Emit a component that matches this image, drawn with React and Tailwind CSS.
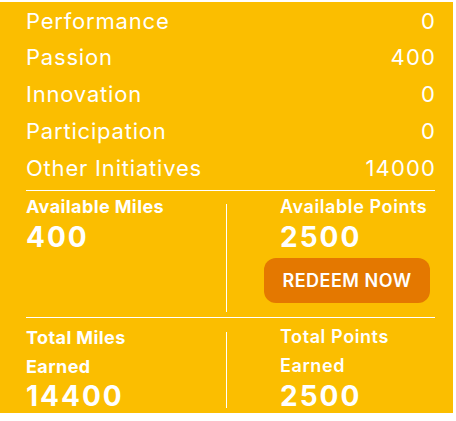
const scores = [
  { label: 'Performance', value: '0' },
  { label: 'Passion', value: '400' },
  { label: 'Innovation', value: '0' },
  { label: 'Participation', value: '0' },
  { label: 'Other Initiatives', value: '14000' },
]

function Divider() {
  return <div className="h-px w-full bg-white" />
}

export default function App() {
  return (
    <div className="h-[421px] w-[456px] bg-white pt-[2px] font-['Inter','Noto_Sans',sans-serif] text-white">
      <div className="h-[411px] w-[453px] bg-[#fbbe00] pl-[26px] pr-[18px] pt-[0.5px]">
        <ul>
          {scores.map((row) => (
            <li key={row.label} className="flex items-center justify-between text-[22px] leading-[36.75px] font-normal tracking-[0.8px]">
              <span>{row.label}</span>
              <span className="-mr-[1.2px] tracking-[1.2px]">{row.value}</span>
            </li>
          ))}
        </ul>

        <div className="mt-[3.75px]">
          <Divider />
        </div>

        <div className="flex h-[126px]">
          <div className="w-[200px] pt-[3.5px]">
            <p className="text-[18px] leading-[24px] font-bold tracking-[0.4px]">Available Miles</p>
            <p className="mt-[1.5px] text-[28px] leading-[34px] font-bold tracking-[2px]">400</p>
          </div>
          <div className="mb-[5px] mt-[13px] w-px bg-white" />
          <div className="flex-1 pt-[3.5px]">
            <div className="pl-[53px]">
              <p className="text-[18px] leading-[24px] font-semibold tracking-[0.6px]">Available Points</p>
              <p className="mt-[1.5px] text-[28px] leading-[34px] font-bold tracking-[2px]">2500</p>
            </div>
            <button className="ml-[37px] mt-[4px] flex h-[45px] w-[166px] items-center justify-center rounded-[12px] bg-[#e47800] text-[18px] font-semibold tracking-[0.5px] text-white">
              REDEEM NOW
            </button>
          </div>
        </div>

        <Divider />

        <div className="flex h-[90px]">
          <div className="w-[200px] pt-[5px]">
            <p className="text-[18px] leading-[29px] font-bold tracking-[0.4px]">Total Miles</p>
            <p className="text-[18px] leading-[29px] font-bold tracking-[0.4px]">Earned</p>
            <p className="text-[28px] leading-[30px] font-bold tracking-[2px]">14400</p>
          </div>
          <div className="mt-[14px] w-px bg-white" />
          <div className="flex-1 pl-[53px] pt-[4px]">
            <p className="text-[18px] leading-[29px] font-semibold tracking-[0.6px]">Total Points</p>
            <p className="text-[18px] leading-[29px] font-semibold tracking-[0.6px]">Earned</p>
            <p className="mt-px text-[28px] leading-[30px] font-bold tracking-[2px]">2500</p>
          </div>
        </div>
      </div>
    </div>
  )
}
